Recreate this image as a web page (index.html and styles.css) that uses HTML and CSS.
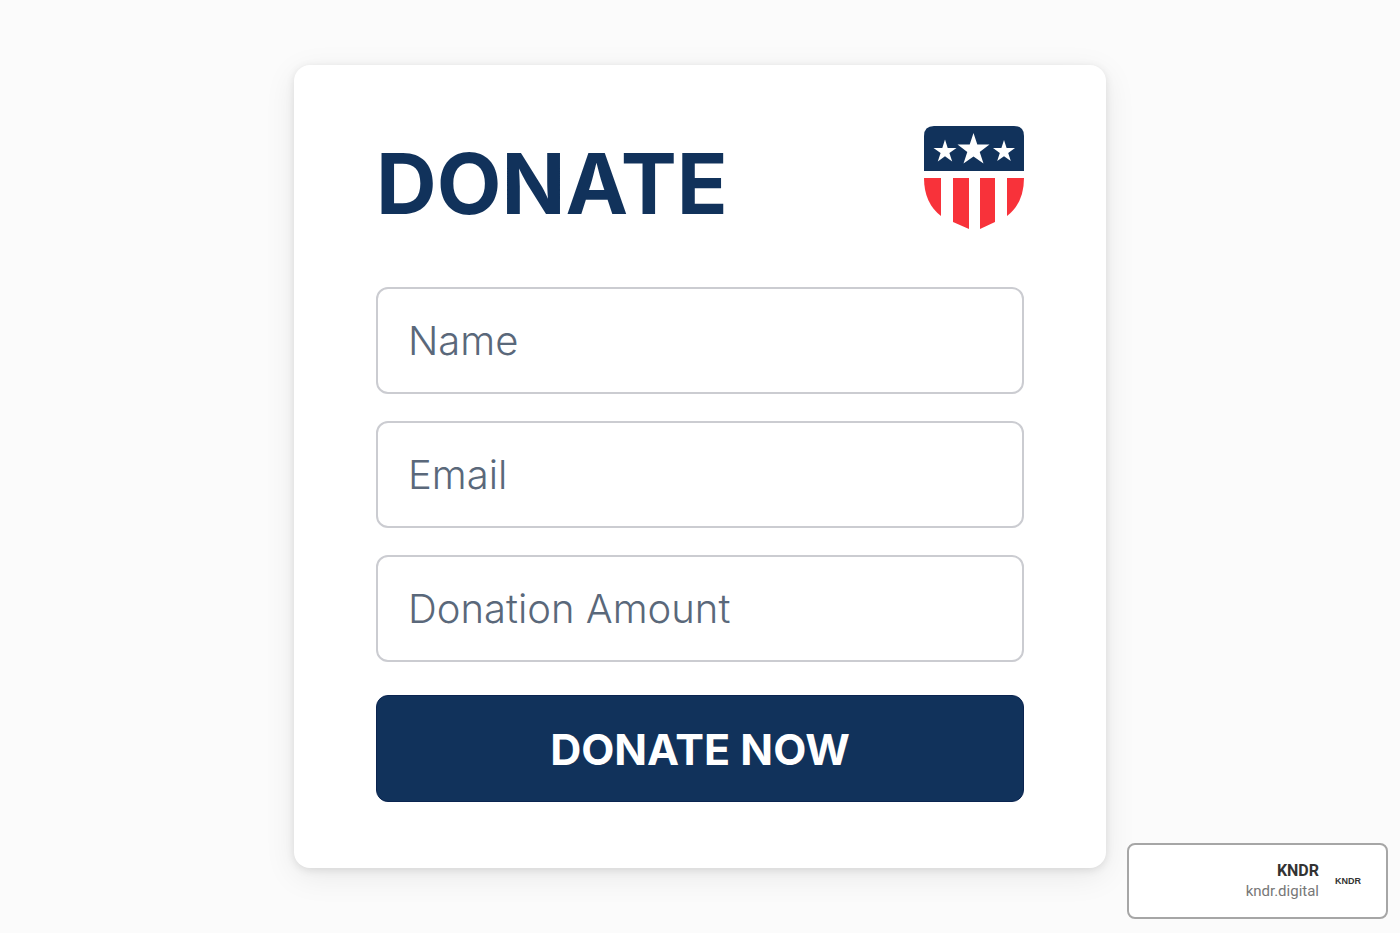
FILE: index.html
```html
<!DOCTYPE html>
<html lang="en">
<head>
<meta charset="utf-8">
<meta name="viewport" content="width=device-width, initial-scale=1">
<title>Donate</title>
<link rel="stylesheet" href="styles.css">
</head>
<body>
<main class="page">
  <form class="card">
    <header class="card-header">
      <h1 class="title">DONATE</h1>
      <svg class="shield" viewBox="0 0 100 103" aria-hidden="true">
        <path class="shield-blue" d="M0 45V10Q0 0 10 0H90Q100 0 100 10V45Z"/>
        <g class="shield-red">
          <path d="M0 52H17V90Q0 77 0 52Z"/>
          <path d="M29 52H45V103L29 96Z"/>
          <path d="M56 52H71V96L56 103Z"/>
          <path d="M83 52H100Q100 77 83 90Z"/>
        </g>
        <g class="shield-stars">
          <path d="M49.500 7L53.300 18.500H65.500L55.700 26L59.500 37.500L49.500 30.500L39.500 37.500L43.300 26L33.500 18.500H45.700Z"/>
          <path d="M21 13.500L23.700 22H32.500L25.400 27L28.200 35.500L21 30.300L13.800 35.500L16.600 27L9.500 22H18.300Z"/>
          <path d="M80 14L82.600 22H91L84.200 27L86.800 35L80 30.200L73.200 35L75.800 27L69 22H77.400Z"/>
        </g>
      </svg>
    </header>
    <div class="fields">
      <input class="field" type="text" name="name" placeholder="Name" aria-label="Name">
      <input class="field" type="email" name="email" placeholder="Email" aria-label="Email">
      <input class="field" type="text" name="amount" placeholder="Donation Amount" aria-label="Donation Amount">
    </div>
    <button class="submit" type="submit">DONATE NOW</button>
  </form>
</main>
<aside class="badge">
  <div class="badge-text">
    <strong class="badge-name">KNDR</strong>
    <span class="badge-site">kndr.digital</span>
  </div>
  <span class="badge-logo">KNDR</span>
</aside>
</body>
</html>
```
FILE: styles.css
```css
* {
  box-sizing: border-box;
}

body {
  margin: 0;
  background: #fbfbfb;
  font-family: Inter, "Liberation Sans", sans-serif;
}

.page {
  display: grid;
  justify-items: center;
  align-items: center;
  min-height: 100vh;
  padding: 24px;
}

.card {
  width: 100%;
  max-width: 812px;
  padding: 61px 82px 66px;
  border-radius: 16px;
  background: #fff;
  box-shadow: 0 8px 32px rgba(0, 0, 0, 0.08), 0 2px 8px rgba(0, 0, 0, 0.1);
}

.card-header {
  display: flex;
  justify-content: space-between;
  align-items: flex-start;
  margin-bottom: 46px;
}

.title {
  margin: 0;
  color: #11325b;
  font-size: 84px;
  font-weight: 700;
  line-height: 115px;
}

.shield {
  flex: none;
  width: 100px;
  height: 103px;
}

.shield-blue {
  fill: #11325b;
}

.shield-red {
  fill: #f8323a;
}

.shield-stars {
  fill: #fff;
}

.fields {
  display: grid;
  gap: 27px;
  margin-bottom: 33px;
}

.field {
  width: 100%;
  height: 107px;
  padding: 0 30px;
  border: 2px solid #cbccd1;
  border-radius: 12px;
  background: #fff;
  color: #11325b;
  font-family: inherit;
  font-size: 40px;
  font-weight: 300;
}

.field::placeholder {
  color: #5a687a;
  opacity: 1;
}

.submit {
  display: block;
  width: 100%;
  height: 107px;
  border: 1px solid #0a2450;
  border-radius: 12px;
  background: #11325b;
  color: #fff;
  font-family: inherit;
  font-size: 43px;
  font-weight: 700;
}

.badge {
  position: fixed;
  right: 12px;
  bottom: 14px;
  display: flex;
  justify-content: flex-end;
  align-items: center;
  gap: 16px;
  width: 261px;
  height: 76px;
  padding-right: 25px;
  border: 2px solid #a6a6a6;
  border-radius: 8px;
  background: #fff;
  font-family: Roboto, "Liberation Sans", sans-serif;
}

.badge-text {
  display: grid;
  justify-items: end;
  line-height: 21px;
}

.badge-name {
  color: #333;
  font-size: 16px;
}

.badge-site {
  color: #777;
  font-size: 15px;
}

.badge-logo {
  color: #333;
  font-family: "Liberation Sans", sans-serif;
  font-size: 9px;
  font-weight: 700;
}
```
